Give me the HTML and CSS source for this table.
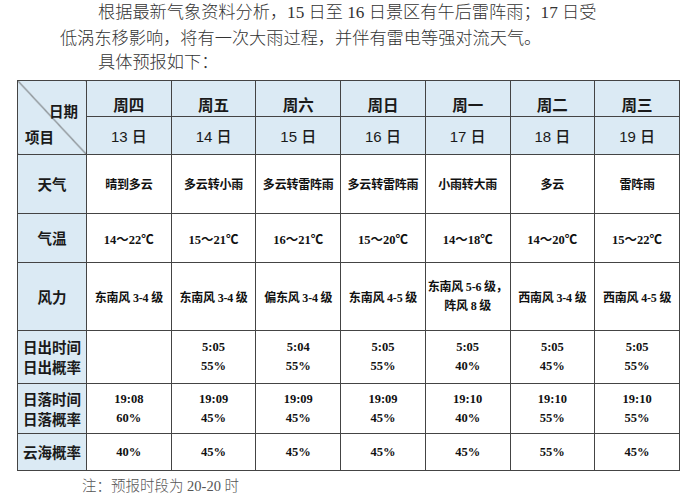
FILE: index.html
```html
<!DOCTYPE html>
<html lang="zh-CN">
<head>
<meta charset="utf-8">
<title>天气预报</title>
<link rel="stylesheet" href="styles.css">
</head>
<body>
<div class="page">
  <p class="intro">根据最新气象资料分析，15 日至 16 日景区有午后雷阵雨；17 日受<br>低涡东移影响，将有一次大雨过程，并伴有雷电等强对流天气。</p>
  <p class="lead">具体预报如下：</p>
  <table class="forecast">
    <colgroup>
      <col class="c-label">
      <col><col><col><col><col><col><col>
    </colgroup>
    <tbody>
      <tr class="r-week">
        <td class="corner" rowspan="2">
          <div class="corner-date">日期</div>
          <div class="corner-item">项目</div>
        </td>
        <td class="head">周四</td>
        <td class="head">周五</td>
        <td class="head">周六</td>
        <td class="head">周日</td>
        <td class="head">周一</td>
        <td class="head">周二</td>
        <td class="head">周三</td>
      </tr>
      <tr class="r-day">
        <td class="head day">13 日</td>
        <td class="head day">14 日</td>
        <td class="head day">15 日</td>
        <td class="head day">16 日</td>
        <td class="head day">17 日</td>
        <td class="head day">18 日</td>
        <td class="head day">19 日</td>
      </tr>
      <tr class="r-weather">
        <td class="label">天气</td>
        <td class="cell">晴到多云</td>
        <td class="cell">多云转小雨</td>
        <td class="cell">多云转雷阵雨</td>
        <td class="cell">多云转雷阵雨</td>
        <td class="cell">小雨转大雨</td>
        <td class="cell">多云</td>
        <td class="cell">雷阵雨</td>
      </tr>
      <tr class="r-temp">
        <td class="label">气温</td>
        <td class="cell num">14～22℃</td>
        <td class="cell num">15～21℃</td>
        <td class="cell num">16～21℃</td>
        <td class="cell num">15～20℃</td>
        <td class="cell num">14～18℃</td>
        <td class="cell num">14～20℃</td>
        <td class="cell num">15～22℃</td>
      </tr>
      <tr class="r-wind">
        <td class="label">风力</td>
        <td class="cell">东南风 3-4 级</td>
        <td class="cell">东南风 3-4 级</td>
        <td class="cell">偏东风 3-4 级</td>
        <td class="cell">东南风 4-5 级</td>
        <td class="cell two">东南风 5-6 级，<br>阵风 8 级</td>
        <td class="cell">西南风 3-4 级</td>
        <td class="cell">西南风 4-5 级</td>
      </tr>
      <tr class="r-rise">
        <td class="label two">日出时间<br>日出概率</td>
        <td class="cell num two"></td>
        <td class="cell num two">5:05<br>55%</td>
        <td class="cell num two">5:04<br>55%</td>
        <td class="cell num two">5:05<br>55%</td>
        <td class="cell num two">5:05<br>40%</td>
        <td class="cell num two">5:05<br>45%</td>
        <td class="cell num two">5:05<br>55%</td>
      </tr>
      <tr class="r-set">
        <td class="label two">日落时间<br>日落概率</td>
        <td class="cell num two">19:08<br>60%</td>
        <td class="cell num two">19:09<br>45%</td>
        <td class="cell num two">19:09<br>45%</td>
        <td class="cell num two">19:09<br>45%</td>
        <td class="cell num two">19:10<br>40%</td>
        <td class="cell num two">19:10<br>55%</td>
        <td class="cell num two">19:10<br>55%</td>
      </tr>
      <tr class="r-sea">
        <td class="label">云海概率</td>
        <td class="cell num">40%</td>
        <td class="cell num">45%</td>
        <td class="cell num">45%</td>
        <td class="cell num">45%</td>
        <td class="cell num">45%</td>
        <td class="cell num">55%</td>
        <td class="cell num">45%</td>
      </tr>
    </tbody>
  </table>
  <p class="note">注：预报时段为 20-20 时</p>
</div>
</body>
</html>
```

FILE: styles.css
```css
html, body {
  margin: 0;
  padding: 0;
  background: #ffffff;
}

.page {
  width: 687px;
  height: 500px;
  overflow: hidden;
  font-family: "Liberation Serif", "Noto Sans CJK SC", serif;
  color: #333333;
}

.intro {
  margin: 0;
  padding-left: 60px;
  text-indent: 38px;
  font-size: 17.2px;
  line-height: 26px;
  font-weight: 300;
  white-space: nowrap;
}

.lead {
  margin: 0;
  padding-left: 98px;
  font-size: 17.2px;
  line-height: 22px;
  font-weight: 300;
}

.forecast {
  margin: 6px 0 0 17px;
  width: 663px;
  table-layout: fixed;
  border-collapse: collapse;
  color: #111111;
}

.c-label {
  width: 69px;
}

.forecast td {
  border: 1px solid #444444;
  padding: 0;
  text-align: center;
  vertical-align: middle;
}

.r-week { height: 36px; }
.r-day { height: 38px; }
.r-weather { height: 59px; }
.r-temp { height: 49px; }
.r-wind { height: 68px; }
.r-rise { height: 53px; }
.r-set { height: 50px; }
.r-sea { height: 37px; }

.head {
  background: #dbeaf4;
  font-family: "Liberation Sans", "Noto Sans CJK SC", sans-serif;
  font-size: 15.5px;
  font-weight: 700;
  color: #1a1a1a;
}

.r-week .head {
  padding-top: 10px;
}

.day {
  font-size: 15px;
  font-weight: 500;
  padding-top: 2px;
}

.corner {
  background:
    linear-gradient(to top right,
      transparent calc(50% - 0.8px),
      #555555 50%,
      transparent calc(50% + 0.8px)),
    #dbeaf4;
  font-family: "Noto Sans CJK SC", sans-serif;
  font-size: 14.5px;
  font-weight: 700;
  color: #1a1a1a;
  vertical-align: top;
}

.corner-date {
  text-align: right;
  padding: 12px 8px 0 0;
  line-height: 18px;
}

.corner-item {
  text-align: left;
  padding: 8px 0 0 7px;
  line-height: 18px;
}

.label {
  background: #dbeaf4;
  font-family: "Noto Sans CJK SC", sans-serif;
  font-size: 14.5px;
  font-weight: 700;
  color: #1a1a1a;
  line-height: 20px;
}

.cell {
  font-family: "Liberation Serif", "Noto Sans CJK SC", serif;
  font-size: 12px;
  font-weight: 700;
  letter-spacing: -0.2px;
  white-space: nowrap;
  background: #ffffff;
}

.num {
  font-size: 12.5px;
  letter-spacing: 0;
}

.cell.two {
  line-height: 19px;
}

.note {
  margin: 5px 0 0 82px;
  font-family: "Liberation Serif", "Noto Sans CJK SC", serif;
  font-size: 14.5px;
  line-height: 20px;
  font-weight: 300;
  color: #555555;
}
```
